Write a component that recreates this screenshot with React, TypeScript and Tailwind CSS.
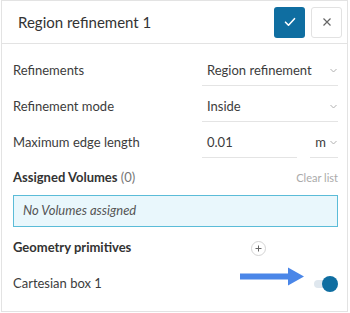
import React from "react";

function Chevron() {
  return (
    <svg width="7" height="5" viewBox="0 0 7 5" className="shrink-0">
      <path d="M0.5 1l3 3 3-3" fill="none" stroke="#b0b0b0" strokeWidth="1" />
    </svg>
  );
}

function SelectRow({ label, value }: { label: string; value: string }) {
  return (
    <div className="flex items-end h-[36px]">
      <div className="w-[189px] h-[30px] flex items-center">{label}</div>
      <div className="flex-1 h-[30px] flex items-center justify-between border-b border-[#e4e4e4] pl-[5px] pr-[1px]">
        <span>{value}</span>
        <Chevron />
      </div>
    </div>
  );
}

export default function App() {
  return (
    <div className="w-[350px] h-[313px] bg-white" style={{ fontFamily: "Lato, 'Open Sans', sans-serif" }}>
      <div className="ml-px w-[347px] h-[312px] border border-[#e3e3e3] text-[#3c3c3c] text-[13px]">
        {/* Header */}
        <div className="h-[43px] border-b border-[#e3e3e3] flex items-center pl-4 pr-[5px]">
          <h1 className="flex-1 text-[15px] text-[#333] pt-[1px]">Region refinement 1</h1>
          <div className="flex gap-[6px]">
            <button className="w-[31px] h-[31px] rounded-[3px] bg-[#0f6ea1] flex items-center justify-center">
              <svg width="12" height="10" viewBox="0 0 12 10">
                <path d="M1.5 5.2l3 3 6-6.5" fill="none" stroke="#fff" strokeWidth="1.6" strokeLinecap="round" strokeLinejoin="round" />
              </svg>
            </button>
            <button className="w-[31px] h-[31px] rounded-[3px] bg-white border border-[#e2e2e2] flex items-center justify-center">
              <svg width="10" height="10" viewBox="0 0 10 10">
                <path d="M1.5 1.5l7 7M8.5 1.5l-7 7" fill="none" stroke="#666" strokeWidth="1.2" />
              </svg>
            </button>
          </div>
        </div>

        {/* Body */}
        <div className="pl-[11px] pr-[9px] pt-[6px]">
          <SelectRow label="Refinements" value="Region refinement" />
          <SelectRow label="Refinement mode" value="Inside" />
          <div className="flex items-end h-[36px]">
            <div className="w-[189px] h-[30px] flex items-center">Maximum edge length</div>
            <div className="w-[95px] h-[30px] flex items-center border-b border-[#e4e4e4] pl-[5px]">0.01</div>
            <div className="ml-[13px] flex-1 h-[30px] flex items-center justify-end gap-[4px] border-b border-[#e4e4e4] pr-[1px]">
              <span>m</span>
              <Chevron />
            </div>
          </div>

          <div className="mt-[10px] h-[20px] flex items-center justify-between">
            <div>
              <span className="font-bold text-[#333]">Assigned Volumes</span>{" "}
              <span className="text-[#777]">(0)</span>
            </div>
            <span className="text-[11px] text-[#aaa]">Clear list</span>
          </div>
          <div className="mt-[7px] h-[32px] border border-[#5bbcd8] bg-[#e9f7fc] flex items-center pl-[9px]">
            <span className="italic text-[#555] text-[13px]">No Volumes assigned</span>
          </div>

          <div className="mt-[11px] h-[20px] flex items-center">
            <span className="w-[238px] font-bold text-[#333]">Geometry primitives</span>
            <span className="w-[15px] h-[15px] rounded-full border border-[#d4d4d4] flex items-center justify-center">
              <svg width="7" height="7" viewBox="0 0 7 7">
                <path d="M3.5 0.5v6M0.5 3.5h6" stroke="#666" strokeWidth="1" />
              </svg>
            </span>
          </div>

          <div className="mt-[16px] h-[20px] flex items-center">
            <span className="flex-1">Cartesian box 1</span>
            <div className="relative w-[98px] h-[20px]">
              <svg className="absolute left-0 top-[-7px]" width="65" height="20" viewBox="0 0 65 20">
                <path d="M0 6.5h48V0.5l16 9-16 9v-6H0z" fill="#4a86e8" />
              </svg>
              <div className="absolute left-[74px] top-[6px] w-[17px] h-[8px] rounded-full bg-[#dfe7ee]" />
              <div className="absolute left-[82px] top-[2px] w-[16px] h-[16px] rounded-full bg-[#0f6ea1]" />
            </div>
          </div>
        </div>
      </div>
    </div>
  );
}
